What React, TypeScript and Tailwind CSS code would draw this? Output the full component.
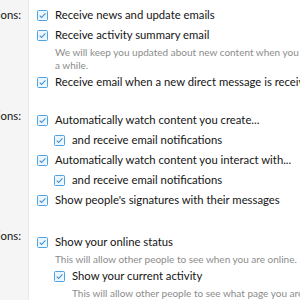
import type { ReactNode } from 'react'

const CheckIcon = () => (
  <svg width="11" height="11" viewBox="0 0 11 11" className="shrink-0">
    <rect x="0.5" y="0.5" width="10" height="10" rx="1" fill="#eef6fd" stroke="#4fa3e0" />
    <path d="M2.7 5.6 L4.6 7.5 L8.4 3.4" fill="none" stroke="#3d8fd1" strokeWidth="1.1" />
  </svg>
)

const Check = ({ label, hint, nested }: { label: string; hint?: ReactNode; nested?: boolean }) => (
  <div className={nested ? 'pl-[17px]' : ''}>
    <div className="flex items-center gap-[7px] h-5 whitespace-nowrap">
      <CheckIcon />
      <span className="text-[11.3px] text-[#141414]">{label}</span>
    </div>
    {hint && <div className="pl-[18px] pt-px text-[10px] leading-[13px] text-[#8c8c8c] whitespace-nowrap">{hint}</div>}
  </div>
)

const Group = ({ title, children, className }: { title: string; children: ReactNode; className?: string }) => (
  <div className="flex">
    <div className="w-[29px] shrink-0 bg-[#f5f5f5] border-r border-[#e8e8e8] flex justify-end pr-[7px] pt-[5px]">
      <span className="h-5 leading-5 text-[11.3px] text-[#141414] whitespace-nowrap">{title}</span>
    </div>
    <div className={`flex-1 min-w-0 pl-2 overflow-hidden ${className ?? ''}`}>{children}</div>
  </div>
)

export default function App() {
  return (
    <div className="w-[300px] h-[300px] overflow-hidden bg-white" style={{ fontFamily: 'Lato, "Open Sans", sans-serif' }}>
      <Group title="Email options:" className="pt-[5px] pb-[9px]">
        <Check label="Receive news and update emails" />
        <Check
          label="Receive activity summary email"
          hint={<>We will keep you updated about new content when you haven't visited in<br />a while.</>}
        />
        <Check label="Receive email when a new direct message is received" />
      </Group>
      <Group title="Content options:" className="pt-[9px] pb-[11px]">
        <Check label="Automatically watch content you create..." />
        <Check nested label="and receive email notifications" />
        <Check label="Automatically watch content you interact with..." />
        <Check nested label="and receive email notifications" />
        <Check label="Show people's signatures with their messages" />
      </Group>
      <Group title="Privacy options:" className="pt-[11px] pb-4">
        <Check label="Show your online status" hint="This will allow other people to see when you are online." />
        <Check nested label="Show your current activity" hint="This will allow other people to see what page you are currently viewing." />
      </Group>
    </div>
  )
}
